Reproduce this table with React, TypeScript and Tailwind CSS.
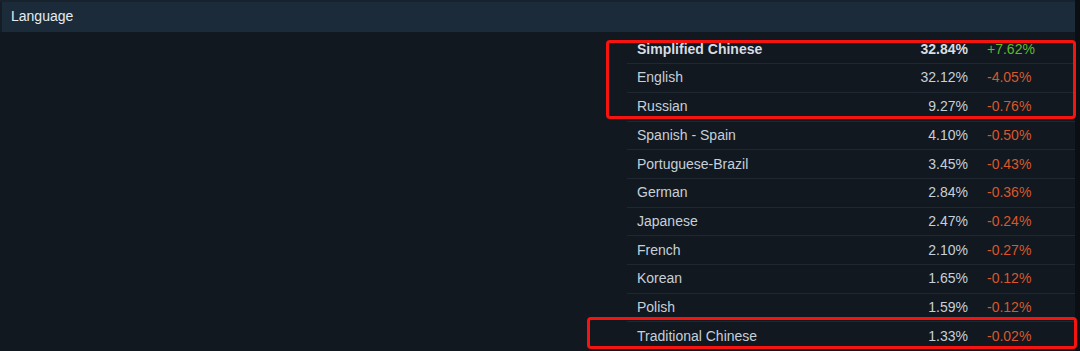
import React from "react";

const rows = [
  { name: "Simplified Chinese", pct: "32.84%", chg: "+7.62%", bold: true },
  { name: "English", pct: "32.12%", chg: "-4.05%" },
  { name: "Russian", pct: "9.27%", chg: "-0.76%" },
  { name: "Spanish - Spain", pct: "4.10%", chg: "-0.50%" },
  { name: "Portuguese-Brazil", pct: "3.45%", chg: "-0.43%" },
  { name: "German", pct: "2.84%", chg: "-0.36%" },
  { name: "Japanese", pct: "2.47%", chg: "-0.24%" },
  { name: "French", pct: "2.10%", chg: "-0.27%" },
  { name: "Korean", pct: "1.65%", chg: "-0.12%" },
  { name: "Polish", pct: "1.59%", chg: "-0.12%" },
  { name: "Traditional Chinese", pct: "1.33%", chg: "-0.02%" },
];

export default function App() {
  return (
    <div
      className="relative w-[1080px] h-[351px] overflow-hidden bg-[#121820] flex"
      style={{ fontFamily: '"Liberation Sans", Arial, sans-serif' }}
    >
      <div className="flex flex-col w-[1075px]">
        <div className="h-[2px] bg-[#18222c]" />
        <div className="h-[30px] flex items-center border-l-2 border-[#141c25] bg-[#1c2b39] pl-[9px] text-[14px] text-[#e4ecf2]">
          Language
        </div>
        <div className="flex flex-1 pt-[3.5px]">
          <div className="flex-1" />
          <div className="w-[448px] flex flex-col">
            {rows.map((r, i) => (
              <div
                key={r.name}
                className={`h-[28.7px] flex items-center text-[14px] ${
                  i < rows.length - 1 ? "border-b border-[#1f2831]" : ""
                }`}
              >
                <div
                  className={`flex-1 pl-[10px] ${
                    r.bold ? "font-bold text-[#d6dde3]" : "text-[#c6d0d8]"
                  }`}
                >
                  {r.name}
                </div>
                <div
                  className={`w-[120px] text-right ${
                    r.bold ? "font-bold text-[#d6dde3]" : "text-[#c6d0d8]"
                  }`}
                >
                  {r.pct}
                </div>
                <div
                  className={`w-[107px] pl-[19px] ${
                    r.chg.startsWith("+") ? "text-[#5fba2e]" : "text-[#d9572b]"
                  }`}
                >
                  {r.chg}
                </div>
              </div>
            ))}
          </div>
        </div>
      </div>
      <div className="w-[5px] bg-[#0b0e12]" />
      <div className="absolute left-[606px] top-[40px] w-[470px] h-[79px] border-[3px] border-[#f5140f] rounded-[4px]" />
      <div className="absolute left-[587px] top-[317px] w-[490px] h-[32px] border-[3px] border-[#f5140f] rounded-[4px]" />
    </div>
  );
}
